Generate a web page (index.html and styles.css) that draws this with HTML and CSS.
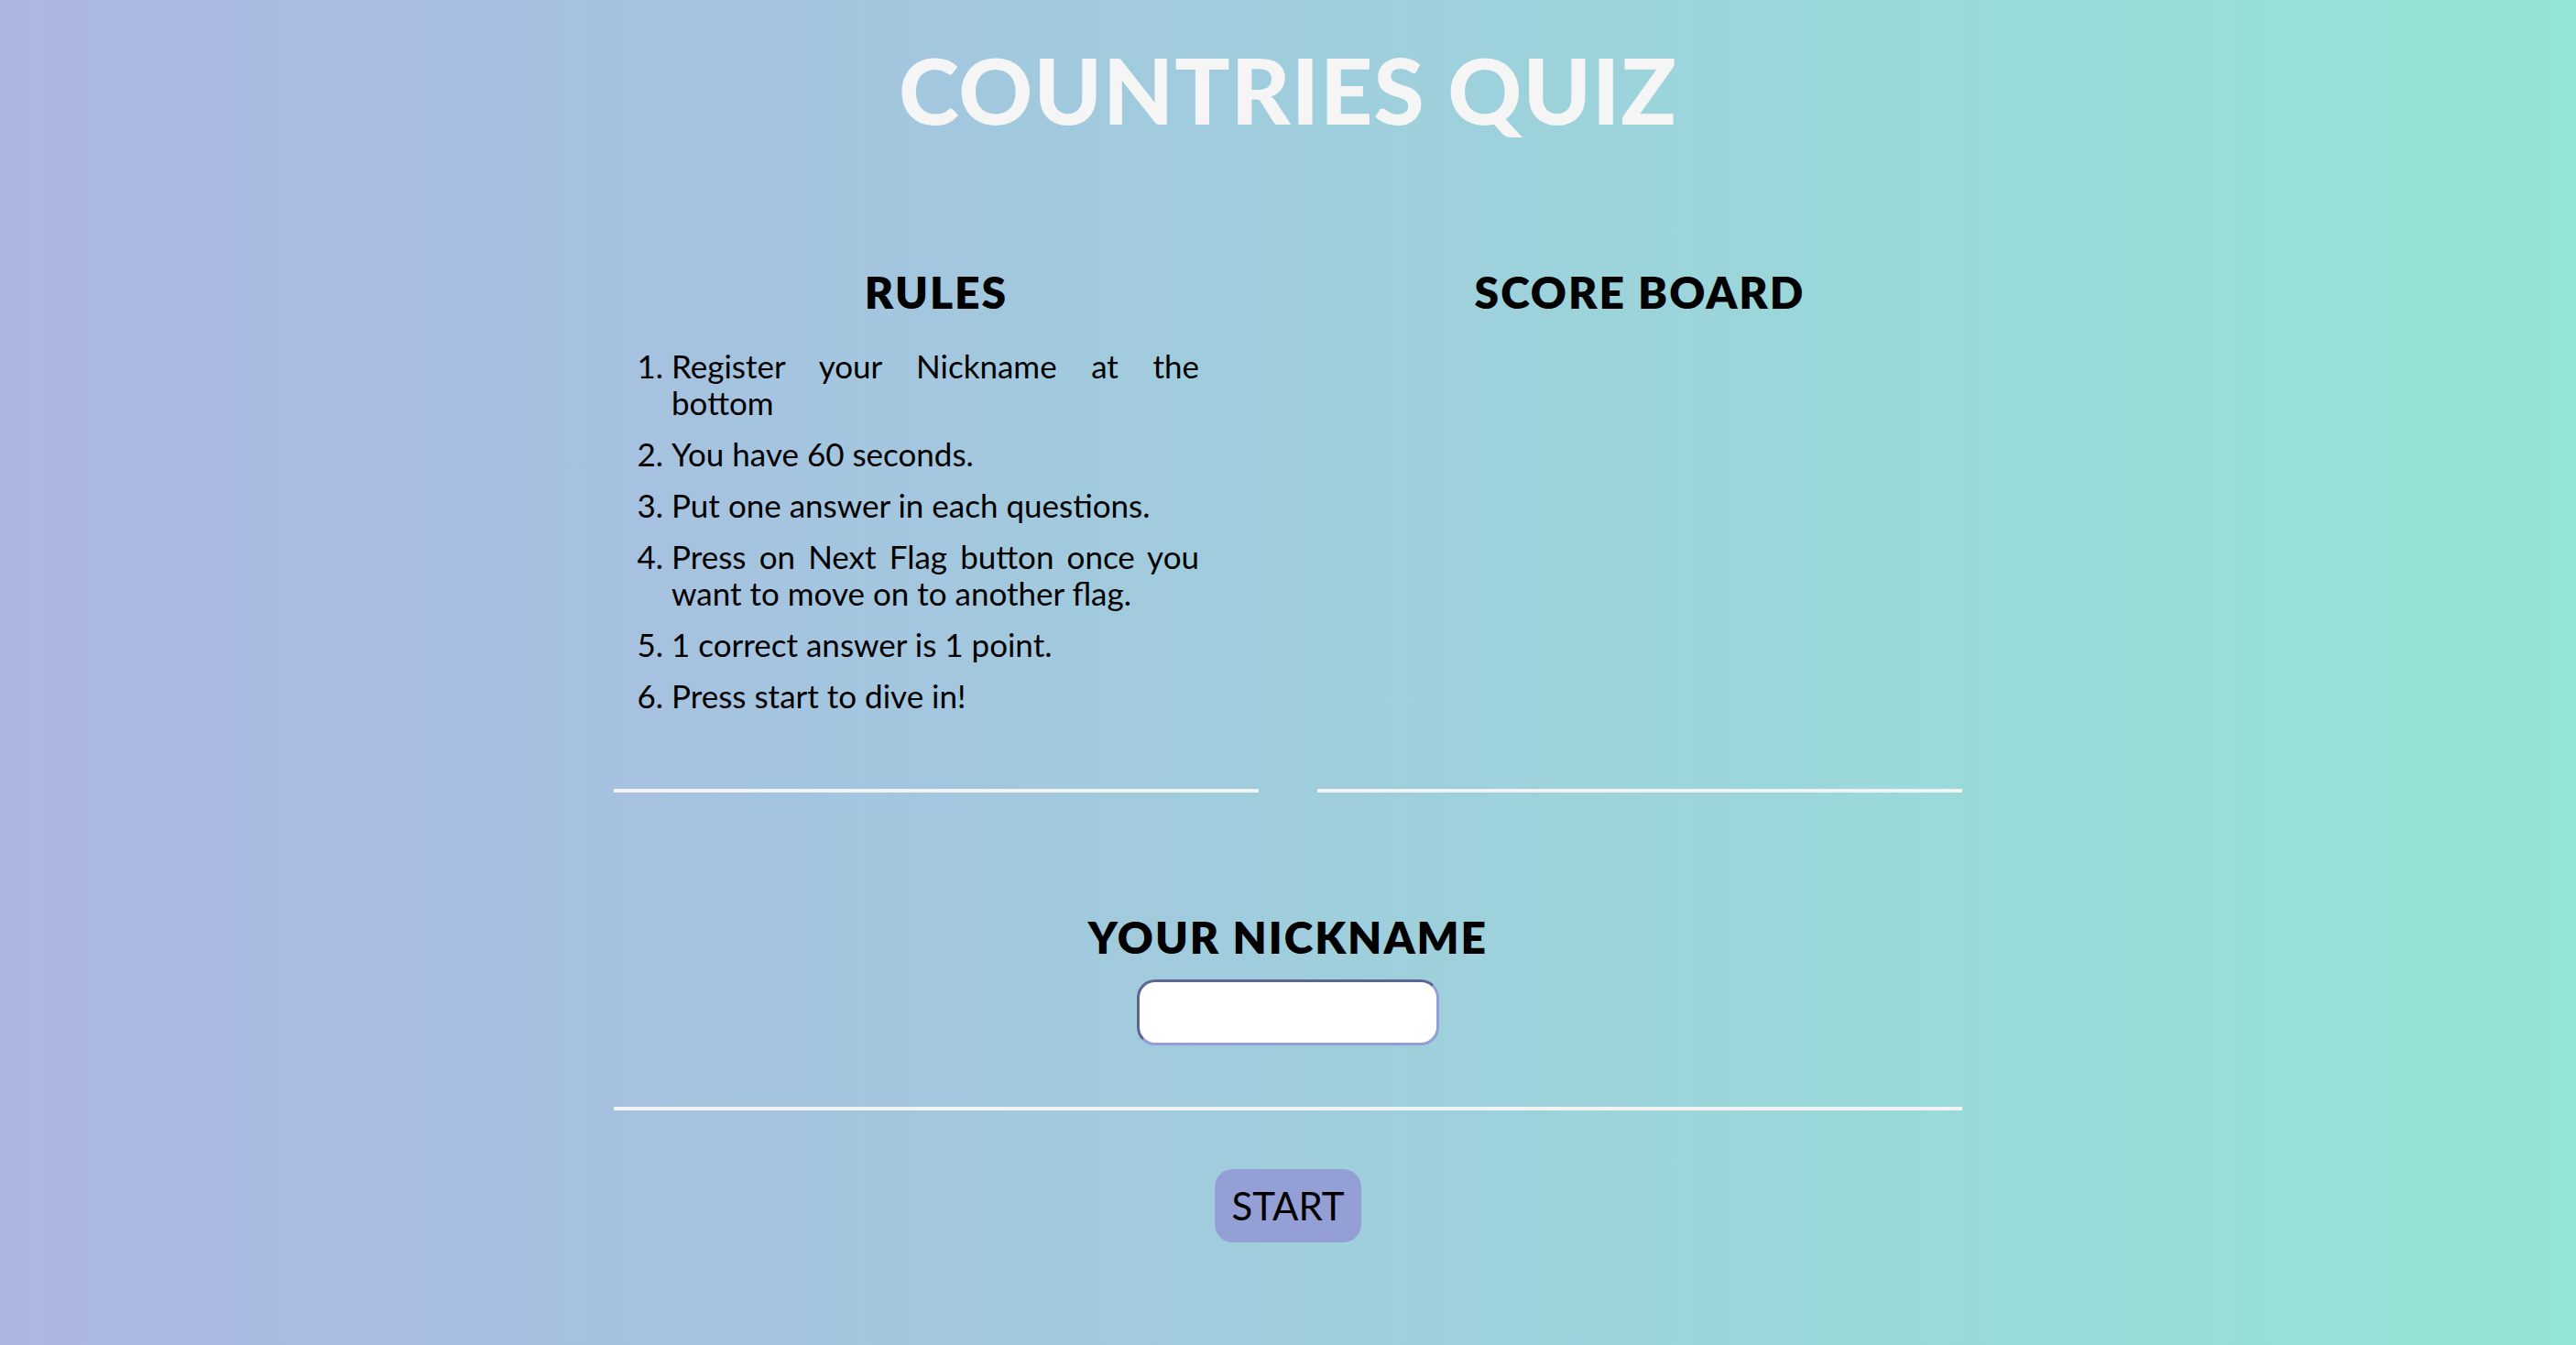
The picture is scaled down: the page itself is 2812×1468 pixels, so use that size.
FILE: index.html
```html
<!DOCTYPE html>
<html lang="en">
<head>
<meta charset="utf-8">
<title>Countries Quiz</title>
<link rel="stylesheet" href="styles.css">
</head>
<body>
<h1 class="title">COUNTRIES QUIZ</h1>
<main class="board">
  <section class="panels">
    <div class="panel">
      <h2 class="heading">RULES</h2>
      <ol class="rules">
        <li>Register your Nickname at the bottom</li>
        <li>You have 60 seconds.</li>
        <li>Put one answer in each questions.</li>
        <li>Press on Next Flag button once you want to move on to another flag.</li>
        <li>1 correct answer is 1 point.</li>
        <li>Press start to dive in!</li>
      </ol>
      <hr class="divider">
    </div>
    <div class="panel">
      <h2 class="heading">SCORE BOARD</h2>
      <div class="scores"></div>
      <hr class="divider">
    </div>
  </section>
  <section class="nickname">
    <h2 class="heading">YOUR NICKNAME</h2>
    <input class="nick-input" type="text" aria-label="Your nickname">
  </section>
  <hr class="divider">
  <button class="start" type="button">START</button>
</main>
</body>
</html>
```

FILE: styles.css
```css
html, body {
  margin: 0;
  padding: 0;
}
body {
  min-height: 100vh;
  background: linear-gradient(to right, #acb6e3, #93e5d6);
  font-family: "Lato", "Noto Sans", sans-serif;
  color: #000;
}
.title {
  margin: 0;
  padding-top: 47px;
  text-align: center;
  font-size: 100px;
  line-height: 1;
  font-weight: 900;
  letter-spacing: 1px;
  color: #f5f5f5;
}
.board {
  width: 1472px;
  margin: 0 auto;
  display: flex;
  flex-direction: column;
  align-items: center;
}
.panels {
  margin-top: 148px;
  width: 100%;
  display: grid;
  grid-template-columns: 1fr 1fr;
  column-gap: 64px;
}
.panel {
  display: flex;
  flex-direction: column;
}
.heading {
  margin: 0;
  text-align: center;
  font-size: 48px;
  line-height: 1;
  font-weight: 800;
  letter-spacing: 2px;
}
.rules {
  margin: 36px 0 0;
  padding: 0 65px 0 63px;
  font-size: 35px;
  line-height: 40px;
  text-align: justify;
}
.rules li {
  margin-bottom: 16px;
}
.divider {
  width: 100%;
  margin: 0;
  border: 0;
  height: 4px;
  background: #f3f3f3;
}
.panel .divider {
  margin-top: auto;
}
.rules + .divider {
  margin-top: 66px;
}
.nickname {
  margin-top: 134px;
  display: flex;
  flex-direction: column;
  align-items: center;
}
.nick-input {
  margin-top: 22px;
  width: 330px;
  height: 72px;
  box-sizing: border-box;
  border: 3px solid;
  border-color: #5e6590 #959dd6 #959dd6 #5e6590;
  border-radius: 20px;
  background: #fff;
  font-size: 28px;
}
.nickname + .divider {
  margin-top: 67px;
}
.start {
  margin-top: 64px;
  height: 80px;
  padding: 0 18px;
  border: 0;
  border-radius: 20px;
  background: #949fd6;
  font-family: "Lato", "Noto Sans", sans-serif;
  font-size: 42px;
  color: #000;
}
```
